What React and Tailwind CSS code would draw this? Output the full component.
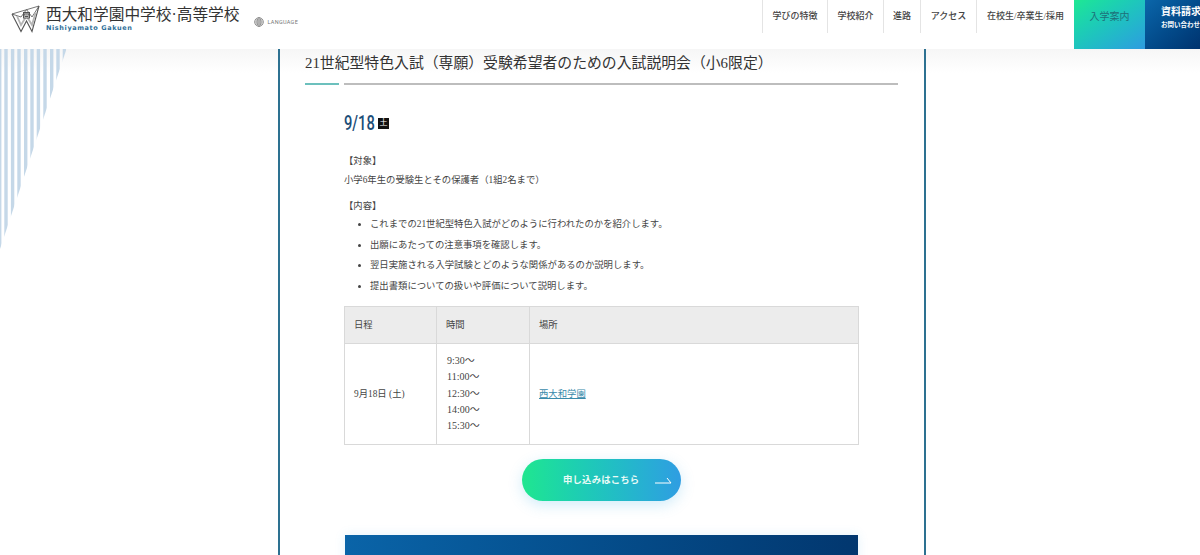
const serif = { fontFamily: '"Liberation Serif","Noto Sans CJK JP",serif' };

function Logo() {
  return (
    <svg width="30" height="28" viewBox="0 0 30 28" fill="none" className="shrink-0">
      <path d="M1 9 L28 1 L21 12 L15.5 4.5 L10 12 Z" stroke="#666" strokeWidth="0.9" fill="none" />
      <path d="M1 9 L10 26.5 L15.5 16 L21 26.5 L28 1" stroke="#555" strokeWidth="1.1" />
      <path d="M6 11 L10 20 L15.5 11 L21 20 L24.5 8" stroke="#b5b5b5" strokeWidth="1.8" />
      <rect x="12" y="7" width="7" height="6.5" fill="#555" />
      <path d="M13 8.8 H18 M13.5 10.5 H17.5 V12.5 H13.5 Z M14.8 8.8 V10.5 M16.2 8.8 V10.5" stroke="#fff" strokeWidth="0.5" />
    </svg>
  );
}

function Globe() {
  return (
    <svg width="10" height="10" viewBox="0 0 10 10" fill="none" stroke="#777" strokeWidth="0.7">
      <circle cx="5" cy="5" r="4.4" />
      <ellipse cx="5" cy="5" rx="2" ry="4.4" />
      <path d="M0.6 5H9.4M1.2 3H8.8M1.2 7H8.8M5 .6V9.4" />
    </svg>
  );
}

function Stripes() {
  const xs = [-2, 4.3, 10.9, 17.3, 24, 30.3, 36.7, 43.3, 50, 56.3, 62.7];
  return (
    <svg width="70" height="205" viewBox="0 0 70 205" className="absolute left-0 top-[49px]">
      <defs>
        <clipPath id="tri">
          <polygon points="0,0 66.5,0 0,200" />
        </clipPath>
      </defs>
      <g clipPath="url(#tri)">
        {xs.map((x) => (
          <rect key={x} x={x} y="0" width="3.4" height="205" fill="#c5d8e8" />
        ))}
      </g>
    </svg>
  );
}

const navItems = [
  ["学びの特徴", "w-[65px]"],
  ["学校紹介", "w-[56px]"],
  ["進路", "w-[37px]"],
  ["アクセス", "w-[56px]"],
  ["在校生/卒業生/採用", "w-[98px]"],
];

const bullets = [
  "これまでの21世紀型特色入試がどのように行われたのかを紹介します。",
  "出願にあたっての注意事項を確認します。",
  "翌日実施される入学試験とどのような関係があるのか説明します。",
  "提出書類についての扱いや評価について説明します。",
];

const times = ["9:30～", "11:00～", "12:30～", "14:00～", "15:30～"];

export default function App() {
  return (
    <div className="relative h-[555px] w-[1200px] overflow-hidden bg-white" style={serif}>
      <header className="relative z-10 flex h-[49px] items-start bg-white">
        <div className="flex items-start pl-[11px] pt-[5px]">
          <Logo />
          <div className="ml-[5px]">
            <div className="text-[15.7px] leading-[20px] text-[#333] whitespace-nowrap">西大和学園中学校·高等学校</div>
            <div className="mt-[-1px] text-[6.5px] font-bold leading-[8px] tracking-[0.6px] text-[#2f6f99] whitespace-nowrap" style={{ fontFamily: '"DejaVu Sans",sans-serif' }}>Nishiyamato Gakuen</div>
          </div>
          <div className="ml-[15px] mt-[12px] flex items-center gap-[3px]">
            <Globe />
            <span className="text-[5.5px] tracking-[0.3px] text-[#777]" style={{ fontFamily: '"Roboto",sans-serif' }}>LANGUAGE</span>
          </div>
        </div>
        <nav className="ml-auto flex h-[49px] items-start">
          {navItems.map(([t, w]) => (
            <div key={t} className={`flex h-[33px] items-center justify-center border-l border-[#e4e4e4] ${w} text-[9px] font-medium text-[#444] whitespace-nowrap`}>
              {t}
            </div>
          ))}
          <div className="flex h-[49px] w-[71px] items-center justify-center bg-gradient-to-br from-[#1fe892] to-[#2e9be0] pb-[16px] text-[10px] text-[#1e6f78]">入学案内</div>
          <div className="h-[49px] w-[55px] overflow-hidden bg-gradient-to-br from-[#0b66aa] to-[#00336f] pl-[16px] pt-[5px] text-white whitespace-nowrap">
            <div className="text-[10px] font-bold leading-[14px]">資料請求</div>
            <div className="text-[6.5px] font-bold leading-[12px]">お問い合わせ</div>
          </div>
        </nav>
      </header>

      <div className="absolute left-0 right-0 top-[49px] h-[24px] bg-gradient-to-b from-[#f6f6f6] to-white" />
      <Stripes />

      <main className="relative ml-[278px] h-[506px] w-[648px] border-x-2 border-[#2d7191] pl-[25px] pr-[26px]">
        <h1 className="pt-[3px] text-[14.85px] font-normal leading-[22px] text-[#333] whitespace-nowrap">
          21世紀型特色入試（専願）受験希望者のための入試説明会（小6限定）
        </h1>
        <div className="mt-[9px] flex h-[2px] gap-[5px]">
          <div className="w-[34px] bg-[#6cc0bd]" />
          <div className="flex-1 bg-[#bdbdbd]" />
        </div>

        <div className="pl-[39px] pr-[39px]">
          <div className="mt-[26px] flex h-[24px] items-center">
            <span className="inline-block w-[31px] origin-left scale-x-[0.7] text-[21px] font-medium leading-[24px] text-[#1c4e78] whitespace-nowrap" style={{ fontFamily: '"Roboto",sans-serif' }}>9/18</span>
            <span className="ml-[3px] flex h-[11px] w-[11px] items-center justify-center bg-[#111] text-[8px] font-normal leading-none text-white">土</span>
          </div>

          <div className="mt-[17px] text-[9.35px] leading-[19px] text-[#444]">
            <p>【対象】</p>
            <p>小学6年生の受験生とその保護者（1組2名まで）</p>
            <p className="mt-[7px]">【内容】</p>
            <ul className="-mt-[1px] ml-[26px] list-disc">
              {bullets.map((b, i) => (
                <li key={b} className={i ? "mt-[1.6px] leading-[19px]" : "leading-[19px]"}>{b}</li>
              ))}
            </ul>
          </div>

          <table className="mt-[10px] w-[515px] table-fixed border-collapse text-[9.35px] text-[#444]">
            <colgroup>
              <col className="w-[92px]" />
              <col className="w-[93px]" />
              <col />
            </colgroup>
            <thead>
              <tr className="h-[37px] bg-[#ececec]">
                {["日程", "時間", "場所"].map((h) => (
                  <th key={h} className="border border-[#d9d9d9] pl-[9px] text-left font-normal">{h}</th>
                ))}
              </tr>
            </thead>
            <tbody>
              <tr className="h-[101px]">
                <td className="border border-[#d9d9d9] pl-[9px]">9月18日 (土)</td>
                <td className="border border-[#d9d9d9] pl-[10px] text-[10px] leading-[16.3px]">
                  {times.map((t) => <div key={t}>{t}</div>)}
                </td>
                <td className="border border-[#d9d9d9] pl-[9px]">
                  <a className="text-[#3a8bab] underline">西大和学園</a>
                </td>
              </tr>
            </tbody>
          </table>

          <div className="mt-[14px] flex justify-center">
            <div className="relative flex h-[42px] w-[159px] items-center rounded-full bg-gradient-to-r from-[#20e68f] to-[#2f9de2] pl-[41px] shadow-[0_4px_14px_rgba(70,180,230,0.25)]">
              <span className="text-[9.35px] font-bold tracking-[0.2px] text-[#e9fbf6] whitespace-nowrap">申し込みはこちら</span>
              <svg width="17" height="7" viewBox="0 0 17 7" fill="none" stroke="#fff" strokeWidth="1" className="absolute left-[133px] top-[18px]">
                <path d="M0 6H16L12 1" />
              </svg>
            </div>
          </div>

          <div className="ml-[1px] mt-[34px] h-[40px] w-[513px] bg-gradient-to-r from-[#0a64a8] to-[#02376f] shadow-[0_0_10px_rgba(70,170,230,0.15)]" />
        </div>
      </main>
    </div>
  );
}
